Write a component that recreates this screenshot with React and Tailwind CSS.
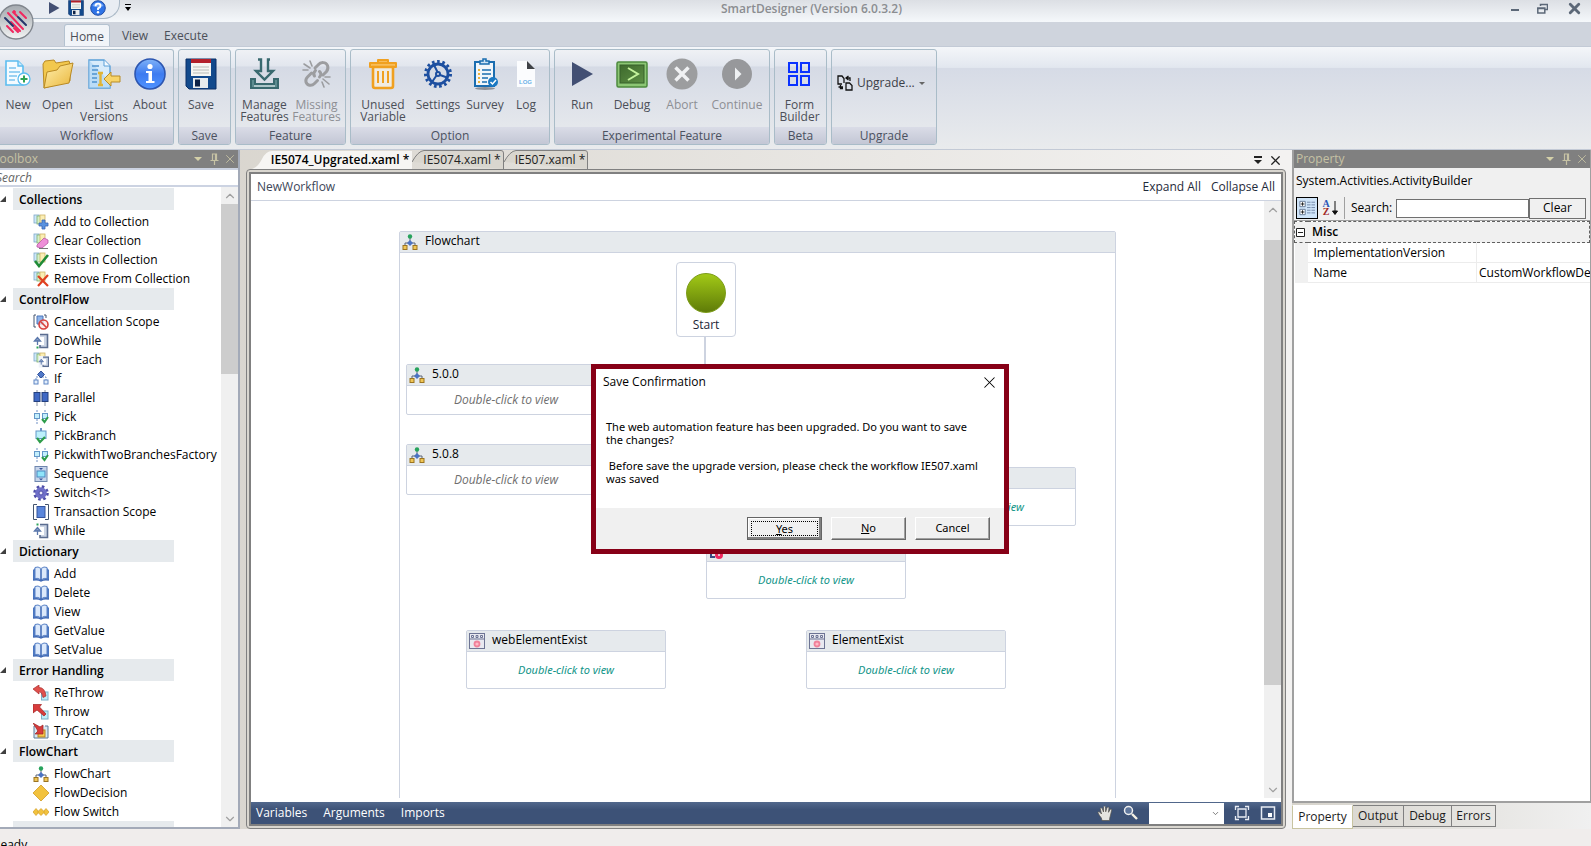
import React from 'react';
import { X, Pin, ChevronUp, ChevronDown } from 'lucide-react';

/* ---------- ribbon icons (32px) ---------- */

const NewIcon = () => (
  <svg viewBox="0 0 32 32" className="w-8 h-8">
    <path d="M4 3h12l5 5v19H4z" fill="#f4fbff" stroke="#5cbdf0" strokeWidth="1.6" />
    <path d="M16 3v5h5" fill="#cdeafb" stroke="#5cbdf0" strokeWidth="1.4" />
    <path d="M7 10h7M7 14h11M7 18h8M7 22h6" stroke="#7cc4ee" strokeWidth="1.6" />
    <circle cx="22" cy="21" r="6" fill="#fff" stroke="#5cbdf0" strokeWidth="1.3" />
    <path d="M22 17.5v7M18.500 21h7" stroke="#2ea355" strokeWidth="2" />
  </svg>
);

const OpenIcon = () => (
  <svg viewBox="0 0 32 32" className="w-8 h-8">
    <defs>
      <linearGradient id="folder" x1="0" y1="0" x2="1" y2="1">
        <stop offset="0" stopColor="#fff0b0" />
        <stop offset="1" stopColor="#eab63a" />
      </linearGradient>
    </defs>
    <path d="M1 6l2-3 9-1 2 3 13-2 1 3v17L2 30z" fill="#f2c84e" stroke="#b98a24" />
    <path d="M2 30L5 14l10-2 3-4 13-3-4 20z" fill="url(#folder)" stroke="#b98a24" />
  </svg>
);

const ListVersionsIcon = () => (
  <svg viewBox="0 0 34 32" className="w-[34px] h-8">
    <path d="M2 2h15l6 6v22H2z" fill="#d8ecfb" stroke="#5aa0d8" strokeWidth="1.4" />
    <path d="M2 2l21 22v6H2z" fill="#a9d2f4" opacity=".6" />
    <path d="M17 2v6h6" fill="#f5fbff" stroke="#5aa0d8" />
    <path d="M5 8h7M5 12h6M5 16h5M5 20h5M5 24h5" stroke="#4d93cf" strokeWidth="1.4" />
    <path d="M11 15h5M11 27h5M13.500 15v12" stroke="#e0b437" strokeWidth="2.400" />
    <path d="M17 21l7-7v4h9v6h-9v4z" fill="#f8d468" stroke="#b88c26" />
  </svg>
);

const AboutIcon = () => (
  <svg viewBox="0 0 32 32" className="w-8 h-8">
    <defs>
      <linearGradient id="about" x1="0" y1="0" x2="0" y2="1">
        <stop offset="0" stopColor="#7fb2f8" />
        <stop offset=".5" stopColor="#3d7bf0" />
        <stop offset="1" stopColor="#4f93ff" />
      </linearGradient>
    </defs>
    <circle cx="16" cy="16" r="15" fill="url(#about)" stroke="#2d56b0" strokeWidth="1.6" />
    <circle cx="16" cy="8.500" r="2.600" fill="#fff" />
    <path d="M12 13h6v10h2.500v2h-8.500v-2h2.500v-8H12z" fill="#fff" />
  </svg>
);

const SaveIcon = ({ className }) => (
  <svg viewBox="0 0 32 32" className={className}>
    <path d="M1 1h30v30H4l-3-3z" fill="#12498c" stroke="#0b2f66" />
    <rect x="6" y="1" width="20" height="17" fill="#f6f6f2" />
    <rect x="6" y="1" width="20" height="4" fill="#b3202a" />
    <path d="M8 9h16M8 12h16M8 15h16" stroke="#b9bcb8" />
    <rect x="8" y="20" width="15" height="10" fill="#e9ecee" />
    <rect x="10" y="21.500" width="5" height="7" fill="#0c2146" />
  </svg>
);

const ManageIcon = () => (
  <svg viewBox="0 0 32 32" className="w-8 h-8" fill="none" stroke="#39696f" strokeWidth="2.400">
    <path d="M9 1.500h3V13H7l8.500 8.500L24 13h-5V1.500h2" />
    <path d="M2 21h4v5h19v-5h4v9H2z" strokeWidth="2" fill="#5d8c90" />
    <path d="M5 28h21" stroke="#c9dadc" strokeWidth="1.500" />
  </svg>
);

const MissingIcon = () => (
  <svg viewBox="0 0 32 32" className="w-8 h-8" fill="none" stroke="#9c9da0" strokeWidth="3" strokeLinecap="round">
    <path d="M14 10l3-3c3-3.500 8-3 9.500.5 1 2.500.5 4-1 6l-3.500 3.500M16.500 22.500l-3 3c-3 3-7.500 2-8.500-1.500-.5-2 0-3.500 1.500-5l4-4M13.500 18c-1.500-2-.5-4 1-5.500M18.500 13.500c2 1.500 1.500 4 0 5.500" />
    <path d="M3 6l6 4M9 3l2 5M2 12h5M22 21l6 5M21 24l2 5M24 19h5" strokeWidth="1.600" />
  </svg>
);

const TrashIcon = () => (
  <svg viewBox="0 0 32 32" className="w-8 h-8">
    <path d="M11 5V2h10v3M3 5h26v4H3z" fill="#f8bd5a" stroke="#f0a020" strokeWidth="2" strokeLinejoin="round" />
    <path d="M6 9h20v19q0 2-2 2H8q-2 0-2-2z" fill="#f0ebe2" stroke="#f0a020" strokeWidth="2.600" />
    <path d="M11 13v12M16 13v12M21 13v12" stroke="#f0a020" strokeWidth="2" />
  </svg>
);

const SettingsIcon = () => (
  <svg viewBox="0 0 32 32" className="w-8 h-8" fill="none" stroke="#1d4fa0">
    <circle cx="16" cy="16" r="12.500" strokeWidth="3" strokeDasharray="2.620 2.620" />
    <circle cx="16" cy="16" r="10" strokeWidth="2.800" />
    <circle cx="16" cy="16" r="2" strokeWidth="2" />
    <path d="M18 17l7 2.500M14.500 17.500L10 24M15.500 14L12 7" strokeWidth="2" />
  </svg>
);

const SurveyIcon = () => (
  <svg viewBox="0 0 32 32" className="w-8 h-8">
    <ellipse cx="16" cy="30.500" rx="10" ry="1.500" fill="#8d9097" />
    <rect x="6" y="4" width="19" height="24" fill="#f1f6fa" stroke="#1a6db0" strokeWidth="2" />
    <path d="M11 6V3h3V1h3v2h3v3z" fill="#cfe4f4" stroke="#1a6db0" strokeWidth="1.500" />
    <path d="M9 12h2M9 16h2M9 20h2M9 24h2" stroke="#eeb43c" strokeWidth="2.200" />
    <path d="M13 12h9M13 16h9M13 20h6M13 24h5" stroke="#1a6db0" strokeWidth="1.600" />
    <circle cx="24" cy="24" r="5" fill="#1a78c2" />
    <path d="M21.500 24l2 2 3.500-4" fill="none" stroke="#fff" strokeWidth="1.500" />
  </svg>
);

const LogIcon = () => (
  <svg viewBox="0 0 32 32" className="w-8 h-8">
    <path d="M7 3h10l8 8v18H7z" fill="#fbfcfe" />
    <path d="M17 3v8h8z" fill="#3f4247" />
    <text x="9" y="26" fontSize="6" fontFamily="Liberation Sans" fontWeight="700" fill="#6cb2e8">LOG</text>
  </svg>
);

const RunIcon = ({ className }) => (
  <svg viewBox="0 0 32 32" className={className}>
    <path d="M6 4l21 12L6 28z" fill="#424f73" />
  </svg>
);

const DebugIcon = () => (
  <svg viewBox="0 0 32 32" className="w-8 h-8">
    <defs>
      <linearGradient id="debug" x1="0" y1="0" x2="1" y2="1">
        <stop offset="0" stopColor="#3e6a2d" />
        <stop offset="1" stopColor="#5d8f45" />
      </linearGradient>
    </defs>
    <rect x="1" y="4" width="30" height="25" rx="1.500" fill="#8cc674" stroke="#4d8a3e" strokeWidth="1.500" />
    <rect x="4" y="7" width="24" height="18" fill="url(#debug)" stroke="#37602a" />
    <path d="M12 10l10 6-10 6" fill="none" stroke="#c4f29c" strokeWidth="2" />
  </svg>
);

const AbortIcon = () => (
  <svg viewBox="0 0 32 32" className="w-8 h-8">
    <circle cx="16" cy="16" r="15.500" fill="#9c9d9f" />
    <path d="M9.500 9.500l13 13M22.500 9.500l-13 13" stroke="#f0f1f3" strokeWidth="3.500" />
  </svg>
);

const ContinueIcon = () => (
  <svg viewBox="0 0 32 32" className="w-8 h-8">
    <circle cx="16" cy="16" r="15" fill="#97989b" />
    <path d="M14 9.500l6.500 6.500-6.500 6.500z" fill="#eef0f2" />
  </svg>
);

const FormBuilderIcon = () => (
  <svg viewBox="0 0 32 32" className="w-8 h-8" fill="none" stroke="#0a32ff" strokeWidth="2">
    <path d="M5 5h8v9H5zM17 5h8v9h-8zM5 18h8v9H5zM17 18h8v9h-8z" />
  </svg>
);

const UpgradeIcon = () => (
  <svg viewBox="0 0 16 16" className="w-4 h-4" fill="none" stroke="#111" strokeWidth="1.300">
    <path d="M5 9H1V1h4l2 2.500V8M9 15V8h3.500L15 10.500V15z" />
    <path d="M9 3h4v3M11.500 1L9 3l2.500 2M6 13.500H3.500V10M1.500 12H6" />
  </svg>
);

const HelpIcon = () => (
  <svg viewBox="0 0 16 16" className="w-4 h-4">
    <circle cx="8" cy="8" r="7.300" fill="#2f73e6" stroke="#1f4da6" />
    <path d="M2.500 6a6 6 0 0 1 11 0q-5 2-11 0z" fill="#79aaf5" />
    <path d="M5.500 6.200Q5.500 3.700 8 3.700t2.500 2.200Q10.500 7.400 8 8.300V10" fill="none" stroke="#fff" strokeWidth="1.800" />
    <circle cx="8" cy="12.300" r="1.200" fill="#fff" />
  </svg>
);

const Orb = () => (
  <svg viewBox="0 0 36 36" className="w-9 h-9">
    <defs>
      <linearGradient id="orb" x1="0" y1="0" x2="0" y2="1">
        <stop offset="0" stopColor="#a5aab0" />
        <stop offset=".45" stopColor="#c3c7ca" />
        <stop offset="1" stopColor="#f4f5f5" />
      </linearGradient>
    </defs>
    <circle cx="18" cy="18" r="17" fill="url(#orb)" stroke="#80868d" strokeWidth="1.300" />
    <g strokeWidth="2" strokeLinecap="round" stroke="#f0285f">
      <path d="M15 8l4 4M10 9l15 16M22 8l6 6M16 7l1 1" />
      <path d="M9 22l6 6M16 24l4 4M13 18l9 9" />
    </g>
    <path d="M7 14l8 8M20 13l8 8" strokeWidth="2" strokeLinecap="round" stroke="#26356b" />
  </svg>
);

/* ---------- toolbox icons (16px) ---------- */

const Cards = () => (
  <g>
    <rect x="1" y="1" width="5" height="8" fill="#cde8fa" stroke="#7fa9c8" strokeWidth=".8" />
    <rect x="4" y="2" width="5" height="8" fill="#d5f0c8" stroke="#7fae70" strokeWidth=".8" />
    <rect x="7" y="1" width="5" height="9" fill="#fbeeb4" stroke="#cdb266" strokeWidth=".8" />
  </g>
);

const Tree16 = () => (
  <g>
    <path d="M8 3v5M3 12V9h10v3" fill="none" stroke="#5a6576" />
    <circle cx="8" cy="2.500" r="2.200" fill="#27a35c" />
    <path d="M8 6l3 3-3 3-3-3z" fill="#4b73c4" />
    <rect x="1" y="11.500" width="4" height="4" fill="#f0c656" stroke="#9c7420" />
    <rect x="11" y="11.500" width="4" height="4" fill="#f0c656" stroke="#9c7420" />
  </g>
);

const Gear16 = () => (
  <g>
    <circle cx="8" cy="8" r="6.300" fill="none" stroke="#4f4ea8" strokeWidth="3" strokeDasharray="2.500 2.450" />
    <circle cx="8" cy="8" r="5.800" fill="#6f6fc8" />
    <circle cx="8" cy="8" r="2" fill="#e8e8fa" stroke="#4f4ea8" />
  </g>
);

const Book16 = () => (
  <g>
    <path d="M0 4l2-2v11l-1 1H0zM16 4l-2-2v11l1 1h1z" fill="#4a76c0" />
    <path d="M2 1.500q3-1.500 6 1 3-2.500 6-1v11q-3-1-6 1.500-3-2.500-6-1.500z" fill="#dce9fb" stroke="#5a82c6" />
    <path d="M8 3v11M0 14q5-1 8 1 3-2 8-1" fill="none" stroke="#3e68b4" strokeWidth="1.500" />
  </g>
);

const PickPair = () => (
  <g>
    <path d="M4 1v14M12 1v4" stroke="#6e8fc4" strokeDasharray="2 1" />
    <rect x="1.500" y="4.500" width="5" height="5" fill="#c4effc" stroke="#6498c8" />
    <rect x="9.500" y="4.500" width="5" height="5" fill="#c4effc" stroke="#6498c8" />
    <path d="M9 10l2.500 3L15 8" fill="none" stroke="#2e9d4a" strokeWidth="2" />
  </g>
);

const Loop = () => (
  <g>
    <path d="M7 1.500h7.500v13H7V12" fill="#cbd4e4" stroke="#5b6d90" strokeWidth="1.600" />
    <path d="M7 4h4v8H7z" fill="#fff" />
    <path d="M4.500 12V7M1.500 8L4.500 4.500 7.500 8z" fill="#8fa5c8" stroke="#5b78ac" strokeWidth="1.300" />
  </g>
);

const glyphs = {
  addCollection: <><Cards /><path d="M9 6h3v3h3v3h-3v3H9v-3H6V9h3z" fill="#5b93e0" stroke="#3a66b4" strokeWidth=".8" /></>,
  clearCollection: <><Cards /><path d="M4 12l7-7 4 2v3l-6 5-5-1z" fill="#ee8fd8" stroke="#b657a4" strokeWidth=".8" /><path d="M6 15.500h9" stroke="#777" /></>,
  existsCollection: <><Cards /><path d="M2 9l4 5 9-11" fill="none" stroke="#1f8b36" strokeWidth="2.600" /></>,
  removeCollection: <><Cards /><path d="M5 5l10 10M15 4L5 15" stroke="#e04020" strokeWidth="2.200" /></>,
  cancellation: <><path d="M3 1H1v12h2M11 1h2v3" fill="none" stroke="#44546e" /><path d="M4 2h6v8H4z" fill="#8fb4ea" stroke="#4b74b8" /><circle cx="10.500" cy="10.500" r="4.500" fill="#fbe4e4" fillOpacity=".7" stroke="#d8403c" strokeWidth="1.600" /><path d="M7.500 7.500l6 6" stroke="#d8403c" strokeWidth="1.600" /></>,
  doWhile: <><Loop /><path d="M3.500 13.500h2v2h-2z" fill="#2ca35a" /></>,
  forEach: <><Cards /><g transform="translate(5 4) scale(.72)"><rect x="1" width="14" height="16" fill="#eef2f8" /><Loop /></g></>,
  if: <><path d="M3 12V6h10v6" fill="none" stroke="#6e8fc4" strokeDasharray="2 1" /><path d="M8 0l3.500 3.500L8 7 4.500 3.500z" fill="#4f78c8" stroke="#35549c" /><rect x="1" y="9" width="4" height="4" fill="#e4effc" stroke="#5f86c4" /><rect x="11" y="9" width="4" height="4" fill="#e4effc" stroke="#5f86c4" /></>,
  parallel: <><path d="M4 0v16M12 0v16" stroke="#8a93a4" /><rect x="1" y="2.500" width="6" height="9" fill="#3f68c4" stroke="#24407e" /><rect x="9" y="2.500" width="6" height="9" fill="#3f68c4" stroke="#24407e" /></>,
  pick: <PickPair />,
  pickBranch: <><path d="M8 0v4" stroke="#6e8fc4" strokeWidth="2" /><rect x="3" y="3" width="10" height="7.500" fill="#bdf0fc" stroke="#6498c8" /><path d="M4 10l3 4 5-5" fill="none" stroke="#2e9d4a" strokeWidth="2.200" /></>,
  sequence: <><rect x="2" y=".5" width="12" height="15" fill="#c6d4ea" stroke="#6f86ad" /><rect x="4" y="5" width="8" height="6" fill="#8fe4fa" stroke="#4b88c0" /><path d="M6 2h4l-2 2zM6 12.500h4l-2 2z" fill="#35549c" /></>,
  switch: <Gear16 />,
  transaction: <><path d="M4 .5H.5v15H4M12 .5h3.500v15H12" fill="none" stroke="#44546e" /><rect x="4" y="2.500" width="8" height="11" fill="#5a86dc" stroke="#35549c" /></>,
  while: <><Loop /><path d="M3.500 .5h2v2h-2z" fill="#2ca35a" /></>,
  book: <Book16 />,
  rethrow: <><rect x="8.500" y="7" width="6.500" height="8" fill="#bdeefa" stroke="#7ab0c8" /><path d="M0 4l6-4v2.500q6 0 7 8.500l-3 1.500Q9 6.500 6 6.500V9z" fill="#e0504c" stroke="#a82c2c" strokeWidth=".7" /></>,
  throw: <><rect x="8.500" y="7" width="6.500" height="8" fill="#bdeefa" stroke="#7ab0c8" /><path d="M0 .5h8.500L6.500 3l6.500 7-2 2-7-6L0 9z" fill="#d83c3c" stroke="#a02424" strokeWidth=".7" /></>,
  tryCatch: <><path d="M4 3H1v12h14V3h-3" fill="#d7e8f4" stroke="#5d7896" /><rect x="5" y="7" width="7" height="7" fill="#f6c64c" stroke="#b58320" /><path d="M0 0l7 4 3-2v9H2l3-3z" fill="#d83c3c" stroke="#a02424" strokeWidth=".7" /></>,
  flowchart: <Tree16 />,
  decision: <path d="M8 0l8 8-8 8-8-8z" fill="#f2c23e" stroke="#d19c24" strokeWidth=".8" />,
  flowSwitch: <><path d="M3 4.500L6 8l-3 3.500L0 8zM13 4.500L16 8l-3 3.500L10 8z" fill="#f2c23e" stroke="#d19c24" strokeWidth=".7" /><path d="M8 4.500L11.500 8 8 11.500 4.500 8z" fill="#f2c23e" stroke="#d19c24" strokeWidth=".7" /></>,
  form: <><rect x=".5" y=".5" width="15" height="15" fill="#e8e9f0" stroke="#6d7494" /><path d="M.5 6h15M2.500 2.500h2v2h-2zM7 2.500h2v2H7zM11.500 2.500h2v2h-2z" fill="none" stroke="#6d7494" /><circle cx="8" cy="11" r="2.500" fill="#ffb9c6" stroke="#f0809a" strokeWidth="1.800" /></>,
  designer: <><path d="M2 1v13h4" fill="none" stroke="#3c4a80" strokeWidth="2" /><circle cx="10" cy="12" r="2.500" fill="none" stroke="#f0285f" strokeWidth="3" /></>,
};

const Glyph = ({ name }) => (
  <svg viewBox="0 0 16 16" className="w-4 h-4 shrink-0">{glyphs[name]}</svg>
);

/* ---------- data ---------- */

const toolbox = [
  {
    title: 'Collections',
    items: [
      ['addCollection', 'Add to Collection'],
      ['clearCollection', 'Clear Collection'],
      ['existsCollection', 'Exists in Collection'],
      ['removeCollection', 'Remove From Collection'],
    ],
  },
  {
    title: 'ControlFlow',
    items: [
      ['cancellation', 'Cancellation Scope'],
      ['doWhile', 'DoWhile'],
      ['forEach', 'For Each'],
      ['if', 'If'],
      ['parallel', 'Parallel'],
      ['pick', 'Pick'],
      ['pickBranch', 'PickBranch'],
      ['pick', 'PickwithTwoBranchesFactory'],
      ['sequence', 'Sequence'],
      ['switch', 'Switch<T>'],
      ['transaction', 'Transaction Scope'],
      ['while', 'While'],
    ],
  },
  {
    title: 'Dictionary',
    items: [
      ['book', 'Add'],
      ['book', 'Delete'],
      ['book', 'View'],
      ['book', 'GetValue'],
      ['book', 'SetValue'],
    ],
  },
  {
    title: 'Error Handling',
    items: [
      ['rethrow', 'ReThrow'],
      ['throw', 'Throw'],
      ['tryCatch', 'TryCatch'],
    ],
  },
  {
    title: 'FlowChart',
    items: [
      ['flowchart', 'FlowChart'],
      ['decision', 'FlowDecision'],
      ['flowSwitch', 'Flow Switch'],
    ],
  },
];

/* ---------- pieces ---------- */

const RibbonGroup = ({ title, className, children }) => (
  <section className={`flex flex-col h-24 shrink-0 rounded-[3px] border border-[#a9bcc8] overflow-hidden bg-[linear-gradient(#eff1f5,#e2e6ee_17%,#d5dae5_18%,#e4e7ec_80%)] ${className}`}>
    <div className="flex flex-1 items-start px-[3px] pt-2">{children}</div>
    <h2 className="h-[17px] leading-[17px] text-center text-[#4b5160] bg-[linear-gradient(#dadce7,#c3c7d5)]">{title}</h2>
  </section>
);

const RibbonButton = ({ icon, label, width, disabled }) => (
  <button
    disabled={disabled}
    className={`flex flex-col items-center shrink-0 gap-[9px] leading-[12px] ${width} ${disabled ? 'text-[#8d8f94]' : 'text-[#4b4f58]'}`}
  >
    {icon}
    <span className="whitespace-pre-line">{label}</span>
  </button>
);

const PanelHeader = ({ title, className }) => (
  <header className={`flex items-center h-[18px] shrink-0 bg-[#808080] text-[#c6c2a4] ${className}`}>
    <h2 className="flex-1">{title}</h2>
    <button aria-label="Window position" className="w-4 flex justify-center">
      <span className="border-x-4 border-x-transparent border-t-4 border-t-[#d4d0a8]" />
    </button>
    <button aria-label="Auto hide" className="w-4 flex justify-center">
      <svg viewBox="0 0 9 12" className="w-[9px] h-3" fill="none" stroke="currentColor" strokeWidth="1.200">
        <path d="M2.500 7V1h4v6M5.500 1v6M.5 7.500h8M4.500 8v4" />
      </svg>
    </button>
    <button aria-label="Close" className="w-4 flex justify-center"><X size={14} strokeWidth={1.5} /></button>
  </header>
);

const ScrollBar = ({ children }) => (
  <div className="flex flex-col w-[17px] shrink-0 bg-[#f0f0f0] text-[#a0a0a0]">
    <div className="flex items-center justify-center h-[17px] shrink-0"><ChevronUp size={14} /></div>
    <div className="flex-1 min-h-0">{children}</div>
    <div className="flex items-center justify-center h-[17px] shrink-0"><ChevronDown size={14} /></div>
  </div>
);

const FlowNode = ({ icon, title, tall, className }) => (
  <div className={`absolute w-[200px] flex flex-col bg-white border border-[#cdd3e0] rounded-[2px] ${tall ? 'h-[59px]' : 'h-[51px]'} ${className}`}>
    <div className="flex items-center h-[21px] shrink-0 gap-[7px] pl-0.5 bg-[#e6eaed] border-b border-[#cdd3e0] text-black leading-[18px]">
      <Glyph name={icon} />
      <span className="pb-0.5">{title}</span>
    </div>
    <div className={`flex flex-1 items-center justify-center italic ${tall ? "text-[11px] text-[#109488] font-['Noto_Sans',sans-serif]" : 'text-[#6e6e6e]'}`}>
      Double-click to view
    </div>
  </div>
);

const Toolbox = () => (
  <aside className="flex flex-col w-60 shrink-0 bg-white border-r-2 border-b-2 border-[#a3aab8]">
    <PanelHeader title="Toolbox" className="-ml-[7px]" />
    <input
      aria-label="Search toolbox"
      placeholder="Search"
      className="h-[19px] shrink-0 -ml-[5px] pl-px italic bg-white border-y-2 border-[#ccd3e2] outline-none placeholder:text-[#666]"
    />
    <div className="flex flex-1 min-h-0">
      <div className="flex-1 min-w-0 overflow-hidden pt-px">
        {toolbox.map((group) => (
          <div key={group.title}>
            <div className="flex items-center h-[22px]">
              <svg viewBox="0 0 6 6" className="w-[6px] h-[6px]"><path d="M6 0v6H0z" fill="#404040" /></svg>
              <h3 className="ml-[7px] w-[161px] h-[22px] leading-[24px] pl-1.5 font-semibold text-black bg-[#e6eaed]">{group.title}</h3>
            </div>
            <ul className="pt-0.5">
              {group.items.map(([icon, label]) => (
                <li key={label} className="flex items-center gap-[5px] h-[19px] pl-[33px] text-black">
                  <Glyph name={icon} />
                  {label}
                </li>
              ))}
            </ul>
          </div>
        ))}
        <div className="ml-[13px] w-[161px] h-[22px] bg-[#e6eaed]" />
      </div>
      <ScrollBar>
        <div className="h-[28%] bg-[#cdcdcd]" />
      </ScrollBar>
    </div>
  </aside>
);

const DocTabs = () => (
  <nav className="flex items-end h-[19px] shrink-0 pl-1.5 text-[#222]">
    <button className="relative h-[18px] w-[160px] pl-4 font-semibold text-black">
      <svg viewBox="0 0 160 18" preserveAspectRatio="none" className="absolute inset-0 w-full h-full">
        <path d="M0 18Q6 16 10 8T20 0H160V18z" fill="#f6f5f3" />
      </svg>
      <span className="relative whitespace-nowrap">IE5074_Upgrated.xaml *</span>
    </button>
    <button className="relative h-[19px] w-[92px] pl-2">
      <svg viewBox="0 0 92 19" preserveAspectRatio="none" className="absolute inset-0 w-full h-full">
        <path d="M0 12Q6 1 12 .5H89Q91.500 .5 91.500 3V19" fill="#d9d6cf" stroke="#808080" />
      </svg>
      <span className="relative whitespace-nowrap">IE5074.xaml *</span>
    </button>
    <button className="relative h-[19px] w-[84px] pl-2">
      <svg viewBox="0 0 84 19" preserveAspectRatio="none" className="absolute inset-0 w-full h-full">
        <path d="M0 12Q6 1 12 .5H81Q83.500 .5 83.500 3V19" fill="#d9d6cf" stroke="#808080" />
      </svg>
      <span className="relative whitespace-nowrap">IE507.xaml *</span>
    </button>
    <div className="flex-1" />
    <button aria-label="Open files" className="w-4 h-[18px] flex flex-col items-center justify-center gap-0.5">
      <span className="w-2 h-0.5 bg-[#222]" />
      <span className="border-x-4 border-x-transparent border-t-4 border-t-[#222]" />
    </button>
    <button aria-label="Close file" className="w-[18px] h-[18px] flex items-center justify-center mr-0.5"><X size={15} color="#222" /></button>
  </nav>
);

const Canvas = () => (
  <div className="relative flex-1 min-w-0 overflow-hidden bg-white">
    <div className="absolute left-[148px] top-[30px] w-[717px] h-[600px] border border-[#cdd3e0] rounded-[2px]">
      <div className="flex items-center h-[21px] gap-[7px] pl-0.5 bg-[#e6eaed] border-b border-[#cdd3e0] text-black leading-[18px]">
        <Glyph name="flowchart" />
        <span className="pb-0.5">Flowchart</span>
      </div>
      <div className="absolute left-[304px] top-[105px] w-0.5 h-[203px] bg-[#cdd3e0]" />
      <div className="absolute left-[276px] top-[30px] w-[60px] h-[75px] flex flex-col items-center bg-white border border-[#cdd3e0] rounded-[4px] pt-2.5 text-[#1b2638]">
        <div className="w-10 h-10 rounded-full bg-[linear-gradient(#a2c917,#5f7c08)] border border-[#7c9c18]" />
        <span className="mt-1">Start</span>
      </div>
      <FlowNode icon="flowchart" title="5.0.0" className="left-[6px] top-[132px]" />
      <FlowNode icon="flowchart" title="5.0.8" className="left-[6px] top-[212px]" />
      <FlowNode icon="designer" title="" tall className="left-[306px] top-[308px]" />
      <FlowNode icon="form" title="" tall className="left-[476px] top-[235px]" />
      <FlowNode icon="form" title="webElementExist" tall className="left-[66px] top-[398px]" />
      <FlowNode icon="form" title="ElementExist" tall className="left-[406px] top-[398px]" />
    </div>
  </div>
);

const Designer = () => (
  <main className="flex flex-col flex-1 min-w-0 mx-1.5">
    <DocTabs />
    <div className="flex flex-1 min-h-0 p-0.5 rounded-[4px] border border-[#808080] bg-[#d9d6cf]">
      <div className="flex flex-col flex-1 min-w-0 border-2 border-[#808080] bg-white">
        <div className="flex items-center h-[27px] shrink-0 px-1.5 border-b border-[#cdd3e0] text-[#1f2a3a]">
          <span className="flex-1 text-[#3c4658]">NewWorkflow</span>
          <button>Expand All</button>
          <button className="ml-2.5">Collapse All</button>
        </div>
        <div className="flex flex-1 min-h-0 mb-1">
          <Canvas />
          <ScrollBar>
            <div className="mt-[22px] h-[445px] bg-[#cdcdcd]" />
          </ScrollBar>
        </div>
        <div className="flex items-center h-[22px] shrink-0 px-[5px] text-white bg-[linear-gradient(#52688c,#3d5277_35%)]">
          <button>Variables</button>
          <button className="ml-4">Arguments</button>
          <button className="ml-4">Imports</button>
          <div className="flex-1" />
          <button aria-label="Pan">
            <svg viewBox="0 0 16 16" className="w-4 h-[18px]">
              <path d="M5 15.500Q5 13 2.500 10.500L.8 7.500q1-1.500 2.500 0L4.500 9 3.200 3.500q.8-1.600 2 0L6.500 7l0-5q1-1.800 2 0l.2 4.800L10 2.500q1.300-1.300 2 .3L11.500 7.300l1.700-3q1.500-.8 1.500.8L13.300 11q-.8 2-.8 4.500z" fill="#e4e4e0" stroke="#55524c" strokeWidth=".7" />
            </svg>
          </button>
          <button aria-label="Magnify" className="ml-2.5">
            <svg viewBox="0 0 16 16" className="w-4 h-4" fill="none">
              <circle cx="5.500" cy="5.500" r="4" stroke="#f0f0f0" strokeWidth="1.500" fill="#5f769c" />
              <path d="M9 9l5 5" stroke="#f4f0e4" strokeWidth="2.400" />
            </svg>
          </button>
          <div className="relative ml-2.5 w-[75px] h-[21px]">
            <select aria-label="Zoom" className="appearance-none w-full h-full bg-white text-black" defaultValue="">
              <option value=""></option>
            </select>
            <ChevronDown size={9} className="absolute right-1 top-1.5 text-[#555] pointer-events-none" />
          </div>
          <button aria-label="Fit to screen" className="ml-2.5">
            <svg viewBox="0 0 16 16" className="w-4 h-4" fill="none" stroke="#e8ecf4" strokeWidth="1.300">
              <path d="M1.500 5V1.500H5M11 1.500h3.500V5M14.500 11v3.500H11M5 14.500H1.500V11M4 4h8v8H4z" />
            </svg>
          </button>
          <button aria-label="Overview" className="ml-2.5">
            <svg viewBox="0 0 16 16" className="w-4 h-4">
              <path d="M1.500 2h13v12h-13z" fill="none" stroke="#e8ecf4" strokeWidth="1.500" />
              <path d="M8 8h4v4H8z" fill="#fff" />
            </svg>
          </button>
        </div>
      </div>
    </div>
  </main>
);

const PropertyPanel = () => (
  <aside className="flex flex-col w-[299px] shrink-0">
    <div className="flex flex-col flex-1 min-h-0 border-l-2 border-b-2 border-r border-[#a0a0a0] bg-white text-black">
      <PanelHeader title="Property" className="pl-0.5" />
      <div className="shrink-0 h-[53px] bg-[#f0f0f0] border-b border-[#a0a0a0]">
        <p className="h-7 leading-[26px] pl-0.5">System.Activities.ActivityBuilder</p>
        <div className="flex items-center h-6 pl-0.5 pr-1">
          <button aria-label="Categorized" className="border border-black bg-[#cfe4f8] w-[22px] h-[22px] p-0.5 shrink-0">
            <svg viewBox="0 0 18 18" className="w-full h-full">
              <path d="M1 1.500h6v6H1zM1 10.500h6v6H1z" fill="#fff" stroke="#5f7390" />
              <path d="M4 2.500v4M2 4.500h4M4 11.500v4M2 13.500h4" stroke="#111" />
              <path d="M9 2.500h4M9 5.500h4M9 8.500h4M9 11.500h4M9 14.500h4M14 2.500h4M14 5.500h4M14 8.500h4M14 11.500h4M14 14.500h4" stroke="#6c82a4" />
            </svg>
          </button>
          <button aria-label="Alphabetical" className="flex items-center ml-1 shrink-0">
            <span className="flex flex-col w-2 text-[10px] leading-[8px] font-bold font-['Liberation_Serif',serif]">
              <span className="text-[#2b57b8]">A</span>
              <span className="text-[#a02828]">Z</span>
            </span>
            <svg viewBox="0 0 6 16" className="w-1.5 h-4 ml-0.5"><path d="M3 1v13M.5 11L3 14.500 5.500 11z" stroke="#111" fill="#111" /></svg>
          </button>
          <span className="w-px h-[22px] ml-1.5 bg-[#a0a0a0]" />
          <label htmlFor="prop-search" className="ml-1.5">Search:</label>
          <input id="prop-search" className="flex-1 min-w-0 ml-1 h-[19px] bg-white border border-[#707070] px-1 outline-none" />
          <button className="w-[57px] h-[21px] border border-[#707070] bg-[#f0f0f0]">Clear</button>
        </div>
      </div>
      <table className="w-full table-fixed border-collapse">
        <colgroup>
          <col className="w-[13px]" />
          <col className="w-[169px]" />
          <col />
        </colgroup>
        <thead>
          <tr>
            <th colSpan="3" className="h-[21px] p-0 text-left font-semibold bg-[#f0f0f0] border border-dashed border-[#606060]">
              <div className="flex items-center pl-px">
                <svg viewBox="0 0 9 9" className="w-[9px] h-[9px] mr-[7px]"><path d="M.5 .5h8v8h-8zM2 4.500h5" fill="#fff" stroke="#222" /></svg>
                Misc
              </div>
            </th>
          </tr>
        </thead>
        <tbody>
          <tr>
            <td className="bg-[#f0f0f0]" />
            <td className="h-5 p-0 pl-1.5 border-b border-r border-[#ececec]">ImplementationVersion</td>
            <td className="border-b border-[#ececec]" />
          </tr>
          <tr>
            <td className="bg-[#f0f0f0]" />
            <td className="h-5 p-0 pl-1.5 border-b border-r border-[#ececec]">Name</td>
            <td className="p-0 pl-0.5 border-b border-[#ececec] overflow-hidden whitespace-nowrap">CustomWorkflowDesigner</td>
          </tr>
        </tbody>
      </table>
    </div>
    <nav className="flex h-[26px] shrink-0 pt-0.5 text-[#1c1c1c] bg-[linear-gradient(90deg,#d6d3cb,#f0f0f0)]">
      <button className="h-6 w-[61px] bg-white border border-[#c8c4a0] border-t-white">Property</button>
      <button className="h-[22px] w-[51px] border border-l-0 border-[#808080]">Output</button>
      <button className="h-[22px] w-[48px] border border-l-0 border-[#808080]">Debug</button>
      <button className="h-[22px] w-[44px] border border-l-0 border-[#808080]">Errors</button>
    </nav>
  </aside>
);

const dialogButton = 'w-[75px] h-[23px] bg-[#f0f0f0] border border-t-white border-l-white border-r-[#696969] border-b-[#696969] shadow-[inset_-1px_-1px_#a0a0a0]';

const SaveDialog = () => (
  <div role="dialog" aria-labelledby="dialog-title" className="absolute left-[591px] top-[364px] w-[418px] h-[190px] flex flex-col bg-white border-[5px] border-[#870017] text-black">
    <header className="flex items-center h-[26px] shrink-0 px-[5px]">
      <h2 id="dialog-title" className="flex-1 pl-0.5">Save Confirmation</h2>
      <button aria-label="Close"><X size={19} strokeWidth={1.3} /></button>
    </header>
    <div className="flex-1 pt-[25px] px-2.5 text-[11px] leading-[13px] font-['Noto_Sans',sans-serif]">
      <p>The web automation feature has been upgraded. Do you want to save<br />the changes?</p>
      <p className="mt-[13px]">&nbsp;Before save the upgrade version, please check the workflow IE507.xaml<br />was saved</p>
    </div>
    <footer className="flex items-center justify-end gap-[9px] h-[41px] shrink-0 pr-3.5 pb-px bg-[#f0f0f0] text-[11px] font-['Noto_Sans',sans-serif]">
      <button className="w-[75px] h-[23px] p-[3px] bg-[#f0f0f0] border border-[#646464] shadow-[inset_-2px_-2px_#808080,inset_1px_1px_#fff]">
        <span className="block h-full leading-[13px] border border-dotted border-black"><u>Y</u>es</span>
      </button>
      <button className={dialogButton}><u>N</u>o</button>
      <button className={dialogButton}>Cancel</button>
    </footer>
  </div>
);

const TitleBar = () => (
  <header className="relative flex items-start h-[22px] shrink-0 bg-[linear-gradient(#dcdfe4,#f5f8fb)]">
    <div className="absolute -left-[2px] top-1 z-10"><Orb /></div>
    <div className="flex items-center gap-1.5 w-[120px] h-[19px] pl-[46px] pb-0.5 border-b border-r border-[#a9b8c6] rounded-br-[16px] bg-[#e9edf3]">
      <button aria-label="Run"><RunIcon className="w-4 h-4" /></button>
      <button aria-label="Save"><SaveIcon className="w-4 h-4" /></button>
      <button aria-label="Help"><HelpIcon /></button>
    </div>
    <button aria-label="Customize toolbar" className="flex flex-col items-center gap-0.5 w-4 pt-1">
      <span className="w-1.5 h-px bg-black" />
      <span className="border-x-3 border-x-transparent border-t-4 border-t-black" />
    </button>
    <h1 className="flex-1 text-center font-semibold leading-[18px] text-[#8b8d91] pr-[18px]">SmartDesigner (Version 6.0.3.2)</h1>
    <div className="flex items-center w-[86px] h-4 gap-[18px] pl-1.5 text-[#5c6878]">
      <button aria-label="Minimize" className="w-2 h-0.5 mt-1 bg-[#5c6878]" />
      <button aria-label="Restore">
        <svg viewBox="0 0 11 11" className="w-[11px] h-[11px]" fill="none" stroke="#5c6878">
          <path d="M3.500 3V1.500h7v5H8M3 1.500h8" strokeWidth="1.500" />
          <path d="M.8 5h7v5h-7zM0 5.500h8" strokeWidth="1.500" />
        </svg>
      </button>
      <button aria-label="Close"><X size={17} strokeWidth={4} /></button>
    </div>
  </header>
);

const Ribbon = () => (
  <div className="h-[104px] shrink-0 pt-0.5 border-t border-b border-[#c3cad6] bg-[linear-gradient(#f4f6f9,#e2e7ef_20%,#d6dbe6_21%,#e9ebed)]">
    <div className="flex gap-1">
      <RibbonGroup title="Workflow" className="w-[174px] border-l-0 rounded-l-none">
        <div className="flex -ml-[3px]">
          <RibbonButton icon={<NewIcon />} label="New" width="w-9" />
          <RibbonButton icon={<OpenIcon />} label="Open" width="w-[43px]" />
          <RibbonButton icon={<ListVersionsIcon />} label={'List\nVersions'} width="w-[50px]" />
          <RibbonButton icon={<AboutIcon />} label="About" width="w-[42px]" />
        </div>
      </RibbonGroup>
      <RibbonGroup title="Save" className="w-[53px]">
        <RibbonButton icon={<SaveIcon className="w-8 h-8" />} label="Save" width="w-[38px]" />
      </RibbonGroup>
      <RibbonGroup title="Feature" className="w-[111px]">
        <RibbonButton icon={<ManageIcon />} label={'Manage\nFeatures'} width="w-[51px]" />
        <RibbonButton icon={<MissingIcon />} label={'Missing\nFeatures'} width="w-[53px]" disabled />
      </RibbonGroup>
      <RibbonGroup title="Option" className="w-[200px]">
        <RibbonButton icon={<TrashIcon />} label={'Unused\nVariable'} width="w-[58px]" />
        <RibbonButton icon={<SettingsIcon />} label="Settings" width="w-[52px]" />
        <RibbonButton icon={<SurveyIcon />} label="Survey" width="w-[42px]" />
        <RibbonButton icon={<LogIcon />} label="Log" width="w-[40px]" />
      </RibbonGroup>
      <RibbonGroup title="Experimental Feature" className="w-[216px]">
        <RibbonButton icon={<RunIcon className="w-8 h-8" />} label="Run" width="w-[48px]" />
        <RibbonButton icon={<DebugIcon />} label="Debug" width="w-[52px]" />
        <RibbonButton icon={<AbortIcon />} label="Abort" width="w-[48px]" disabled />
        <RibbonButton icon={<ContinueIcon />} label="Continue" width="w-[62px]" disabled />
      </RibbonGroup>
      <RibbonGroup title="Beta" className="w-[53px]">
        <RibbonButton icon={<FormBuilderIcon />} label={'Form\nBuilder'} width="w-[43px]" />
      </RibbonGroup>
      <RibbonGroup title="Upgrade" className="w-[106px]">
        <button className="flex items-center gap-1 mt-[17px] pl-0.5 text-[#3c4048]">
          <UpgradeIcon />
          Upgrade...
          <span className="border-x-3 border-x-transparent border-t-3 border-t-[#666]" />
        </button>
      </RibbonGroup>
    </div>
  </div>
);

const App = () => {
  return (
    <div className="relative flex flex-col h-screen overflow-hidden text-[12px] leading-4 bg-[#f0edec] font-['Open_Sans','Noto_Sans',sans-serif]">
      <TitleBar />
      <nav className="flex items-end h-6 shrink-0 pl-[64px] bg-[#cfd4dd] text-[#4b4f58]">
        <button className="w-[46px] h-[22px] pt-0.5 rounded-t-[3px] border border-b-0 border-[#b4c2d0] bg-[#f1f4f8]">Home</button>
        <button className="w-[50px] h-[22px] pt-0.5">View</button>
        <button className="w-[52px] h-[22px] pt-0.5">Execute</button>
      </nav>
      <Ribbon />
      <div className="flex flex-1 min-h-0 bg-[linear-gradient(90deg,#d4d0c8,#f3f2f1_80%)]">
        <Toolbox />
        <Designer />
        <PropertyPanel />
      </div>
      <footer className="h-[17px] shrink-0 -ml-[7px] pt-2 text-black">Ready</footer>
      <SaveDialog />
    </div>
  );
}

export default App;
